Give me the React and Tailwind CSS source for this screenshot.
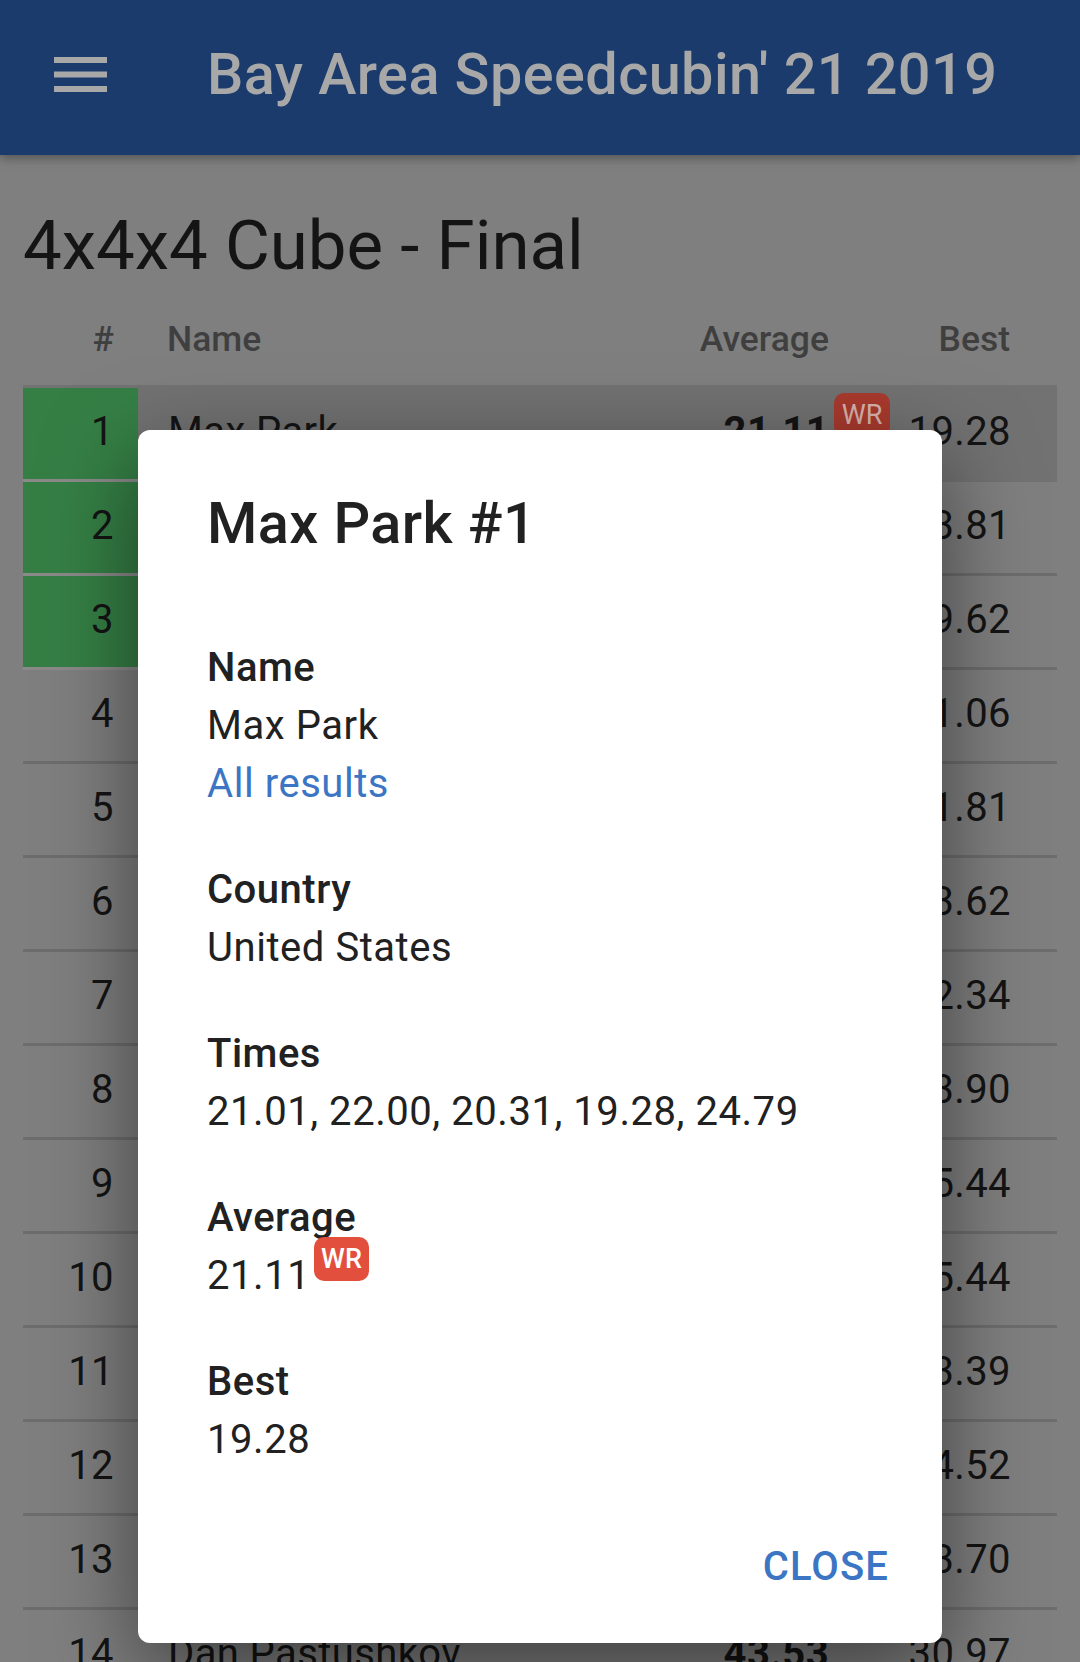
const font = { fontFamily: 'Roboto, sans-serif' };
const rows = [
  ['1', 'Max Park', '21.11', '19.28', true, true],
  ['2', '', '', '23.81', true],
  ['3', '', '', '29.62', true],
  ['4', '', '', '31.06'],
  ['5', '', '', '31.81'],
  ['6', '', '', '33.62'],
  ['7', '', '', '32.34'],
  ['8', '', '', '33.90'],
  ['9', '', '', '35.44'],
  ['10', '', '', '35.44'],
  ['11', '', '', '33.39'],
  ['12', '', '', '34.52'],
  ['13', '', '', '33.70'],
  ['14', 'Dan Pastushkov', '43.53', '30.97'],
];

function Wr({ className }) {
  return (
    <span className={`inline-flex items-center justify-center rounded-[10px] font-medium text-[27px] leading-none tracking-normal ${className}`}>
      WR
    </span>
  );
}

function Section({ label, children, className = '' }) {
  return (
    <div className={className}>
      <div className="font-medium text-[40px] leading-[58px] tracking-[0.5px] text-[#212121]">{label}</div>
      <div className="text-[40px] leading-[58px] tracking-[0.55px] text-[#212121]">{children}</div>
    </div>
  );
}

export default function App() {
  return (
    <div style={font} className="relative w-[1080px] h-[1662px] overflow-hidden bg-[#7f7f7f]">
      <header className="relative z-10 h-[155px] pb-[6px] bg-[#1a3b6b] flex items-center shadow-[0_3px_10px_rgba(0,0,0,0.35)]">
        <svg className="ml-[54px] w-[53px] h-[35px]" viewBox="0 0 53 35">
          <rect x="0" y="0" width="53" height="6" fill="#a8a8a8" />
          <rect x="0" y="14.5" width="53" height="6" fill="#a8a8a8" />
          <rect x="0" y="29" width="53" height="6" fill="#a8a8a8" />
        </svg>
        <h1 className="ml-[100px] text-[57.6px] font-medium tracking-[0.43px] leading-none text-[#a8a8a8] whitespace-nowrap">
          Bay Area Speedcubin' 21 2019
        </h1>
      </header>
      <main className="px-[23px]">
        <h2 className="pt-[51px] text-[69px] leading-[80px] text-[#141414] whitespace-nowrap">4x4x4 Cube - Final</h2>
        <div className="h-[100px] pt-[7px] flex items-center text-[35.5px] font-medium text-[#3f3f3f]">
          <div className="w-[91px] text-right">#</div>
          <div className="ml-[53px] flex-1">Name</div>
          <div className="text-right">Average</div>
          <div className="w-[228px] pr-[47px] text-right">Best</div>
        </div>
        <div className="-mt-[1px]">
          {rows.map(([n, name, avg, best, podium, hi]) => {
            const line = hi ? 'border-[#727272]' : 'border-[#6d6d6d]';
            return (
              <div
                key={n}
                className={`flex items-stretch text-[40px] tracking-[0.4px] text-[#141414] ${hi ? 'h-[97px] pt-[3px] bg-[#727272]' : 'h-[94px]'}`}
              >
                <div className={`w-[115px] pr-[24px] pb-[4px] flex items-center justify-end border-b-[3px] ${podium ? 'bg-[#357f45] border-[#8a8a8a]' : 'border-[#6d6d6d]'}`}>{n}</div>
                <div className={`pl-[30px] pb-[4px] flex-1 flex items-center border-b-[3px] ${line}`}>{name}</div>
                <div className={`relative pb-[4px] flex items-center justify-end font-bold border-b-[3px] ${line}`}>
                  {avg}
                  {hi && <Wr className="absolute left-[calc(100%+5px)] top-[5px] w-[56px] h-[44px] bg-[#a93a2e] text-[#d9b3ae] font-normal" />}
                </div>
                <div className={`w-[228px] pr-[46px] pb-[4px] flex items-center justify-end border-b-[3px] ${line}`}>
                  {best}
                </div>
              </div>
            );
          })}
        </div>
      </main>
      <div className="absolute left-[138px] top-[430px] w-[804px] h-[1213px] z-20 rounded-[12px] bg-white pl-[69px] pr-[53px] flex flex-col shadow-[0_30px_90px_rgba(0,0,0,0.5)]">
        <h3 className="mt-[59px] text-[57.6px] leading-[70px] font-medium tracking-[0.43px] text-[#212121]">Max Park #1</h3>
        <Section label="Name" className="mt-[80px]">
          Max Park
          <div className="text-[#3b75c4]">All results</div>
        </Section>
        <Section label="Country" className="mt-[48px]">United States</Section>
        <Section label="Times" className="mt-[48px]">21.01, 22.00, 20.31, 19.28, 24.79</Section>
        <Section label="Average" className="mt-[48px]">
          <span className="relative">
            21.11
            <Wr className="absolute left-[107px] -top-[15px] w-[55px] h-[44px] bg-[#e34f3d] text-white" />
          </span>
        </Section>
        <Section label="Best" className="mt-[48px]">19.28</Section>
        <div className="mt-auto mb-[46px] flex justify-end">
          <span className="text-[40px] font-medium tracking-[1.1px] text-[#3b75c4]">CLOSE</span>
        </div>
      </div>
    </div>
  );
}
